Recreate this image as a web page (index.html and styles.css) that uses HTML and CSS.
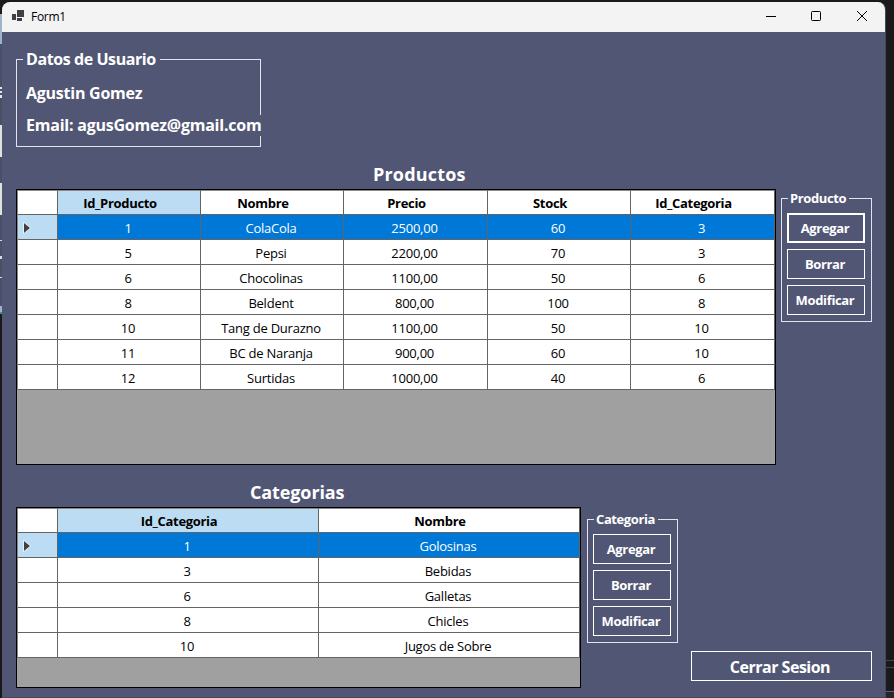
FILE: index.html
```html
<!DOCTYPE html>
<html lang="es">
<head>
<meta charset="utf-8">
<title>Form1</title>
<link rel="stylesheet" href="styles.css">
</head>
<body>
<div class="desktop">
<div class="edge-left"></div>
<div class="window">
  <header class="titlebar">
    <svg class="app-icon" width="12" height="12" viewBox="0 0 12 12"><path fill="#404040" d="M5 0h7v7H5zM0 4h4v6H0zM5 8h5v3H5z"/></svg>
    <span class="title">Form1</span>
    <div class="controls">
      <svg width="12" height="12" viewBox="0 0 12 12"><path d="M2 6.500h10" stroke="#000"/></svg>
      <svg width="12" height="12" viewBox="0 0 12 12"><rect x="1.500" y="1.500" width="9" height="9" rx="1" fill="none" stroke="#000"/></svg>
      <svg width="12" height="12" viewBox="0 0 12 12"><path d="M1 1l10 10M11 1L1 11" stroke="#000"/></svg>
    </div>
  </header>
  <main class="form">
    <section class="group user">
      <div class="legend">Datos de Usuario</div>
      <div class="name">Agustin Gomez</div>
      <div class="email">Email: agusGomez@gmail.com</div>
    </section>

    <div class="block products">
      <div class="main-col">
        <h2>Productos</h2>
        <div class="grid">
          <div class="row head"><div></div><div class="hot">Id_Producto</div><div>Nombre</div><div>Precio</div><div>Stock</div><div>Id_Categoria</div></div>
          <div class="row sel"><div class="mark"><svg width="8" height="12" viewBox="0 0 8 12"><path d="M1 1l6 5-6 5z" fill="#404040" stroke="#fff" stroke-width="1.200" paint-order="stroke"/></svg></div><div>1</div><div>ColaCola</div><div>2500,00</div><div>60</div><div>3</div></div>
          <div class="row"><div></div><div>5</div><div>Pepsi</div><div>2200,00</div><div>70</div><div>3</div></div>
          <div class="row"><div></div><div>6</div><div>Chocolinas</div><div>1100,00</div><div>50</div><div>6</div></div>
          <div class="row"><div></div><div>8</div><div>Beldent</div><div>800,00</div><div>100</div><div>8</div></div>
          <div class="row"><div></div><div>10</div><div>Tang de Durazno</div><div>1100,00</div><div>50</div><div>10</div></div>
          <div class="row"><div></div><div>11</div><div>BC de Naranja</div><div>900,00</div><div>60</div><div>10</div></div>
          <div class="row"><div></div><div>12</div><div>Surtidas</div><div>1000,00</div><div>40</div><div>6</div></div>
        </div>
      </div>
      <section class="group actions">
        <div class="legend">Producto</div>
        <button class="focused">Agregar</button>
        <button>Borrar</button>
        <button>Modificar</button>
      </section>
    </div>

    <div class="block categories">
      <div class="main-col">
        <h2>Categorias</h2>
        <div class="grid">
          <div class="row head"><div></div><div class="hot">Id_Categoria</div><div>Nombre</div></div>
          <div class="row sel"><div class="mark"><svg width="8" height="12" viewBox="0 0 8 12"><path d="M1 1l6 5-6 5z" fill="#404040" stroke="#fff" stroke-width="1.200" paint-order="stroke"/></svg></div><div>1</div><div>Golosinas</div></div>
          <div class="row"><div></div><div>3</div><div>Bebidas</div></div>
          <div class="row"><div></div><div>6</div><div>Galletas</div></div>
          <div class="row"><div></div><div>8</div><div>Chicles</div></div>
          <div class="row"><div></div><div>10</div><div>Jugos de Sobre</div></div>
        </div>
      </div>
      <section class="group actions">
        <div class="legend">Categoria</div>
        <button>Agregar</button>
        <button>Borrar</button>
        <button>Modificar</button>
      </section>
      <button class="logout">Cerrar Sesion</button>
    </div>
  </main>
</div>
<div class="edge-right"></div>
</div>
</body>
</html>
```
FILE: styles.css
```css
* { box-sizing: border-box; }
body {
  margin: 0;
  background: #1a1a1a;
  font-family: "Open Sans", "Noto Sans", sans-serif;
  font-size: 13px;
  color: #000;
}
.desktop {
  display: grid;
  grid-template-columns: 2px 884px 8px;
  height: 698px;
  padding-top: 2px;
  overflow: hidden;
}
.edge-left {
  background: linear-gradient(#1a1a1a 0 12px, #9db4cc 12px 42px, #4b4f68 42px 85px, #e4e6e6 85px 87px, #4b4f68 87px 89px, #e4e6e6 89px 91px, #4b4f68 91px 93px, #e4e6e6 93px 96px, #4b4f68 96px 123px, #dfe3dc 123px 155px, #4b4f68 155px 181px, #dfe3dc 181px 213px, #4b4f68 213px 238px, #d8dae0 238px 239px, #4b4f68 239px 254px, #d8dae0 254px 257px, #4b4f68 257px 275px, #d8dae0 275px 276px, #4b4f68 276px 304px, #9db4cc 304px 310px, #4a8a80 310px 312px, #1a1a1a 312px);
}
.edge-right {
  background: linear-gradient(#1a1a1a 0 658px, #444 658px 659px, #1a1a1a 659px 665px, #444 665px 666px, #1a1a1a 666px 689px, #6256a6 689px 690px, #262626 690px);
}
.window {
  height: 696px;
  background: #525675;
  border-radius: 8px 8px 0 0;
  border-right: 1px solid #45485c;
  border-bottom: 1px solid #45485c;
  overflow: hidden;
}
.titlebar {
  display: flex;
  align-items: center;
  height: 30px;
  padding: 0 17px 0 10px;
  background: #f3f3f3;
}
.title { margin-left: 7px; font-size: 12px; line-height: 28px; letter-spacing: -.3px; }
.app-icon { margin-top: -3px; }
.controls { display: flex; gap: 34px; margin: -2px 0 0 auto; }
.controls svg { display: block; }

.form { padding: 27px 0 0 14px; color: #fff; }
.group { border: 1px solid #e2e3ec; font-weight: 700; }
.legend { width: max-content; background: #525675; white-space: nowrap; }

.user { width: 245px; height: 88px; font-size: 16px; line-height: 22px; padding-left: 6px; letter-spacing: -.25px; }
.user .legend { margin-top: -12px; padding: 0 4px 0 3px; letter-spacing: -.42px; }
.user .name { margin-top: 12px; padding-left: 3px; }
.user .email { margin: 11px -3px 0 0; padding: 0 0 0 3px; width: max-content; line-height: 21px; background: #525675; white-space: nowrap; letter-spacing: -.23px; }

.block { display: flex; align-items: flex-start; }
.products { margin-top: 13px; }
.categories { margin-top: 12px; }
h2 { margin: 0; font-size: 18px; line-height: 29px; height: 29px; font-weight: 700; }
.products h2 { padding-left: 357px; letter-spacing: .18px; }
.categories h2 { padding-left: 234px; height: 30px; line-height: 30px; letter-spacing: -.12px; }

.grid { background: #a0a0a0; border: 1px solid #000; color: #000; }
.products .grid { width: 760px; height: 276px; }
.categories .grid { width: 565px; height: 181px; }
.row { display: grid; height: 25px; border-left: 1px solid #888; }
.products .row { grid-template-columns: 40px 143px 143px 144px 143px 144px; }
.categories .row { grid-template-columns: 40px 261px 261px; }
.row > div {
  background: #fff;
  border-right: 1px solid #646464;
  border-bottom: 1px solid #646464;
  padding-right: 2px;
  text-align: center;
  line-height: 27px;
  height: 25px;
  white-space: nowrap;
  letter-spacing: -.24px;
}
.row.head > div { border-top: 1px solid #888; font-weight: 700; padding-right: 18px; line-height: 24px; letter-spacing: -.32px; }
.row.head > .hot { background: #bcdcf4; }
.row.sel > div { background: #0078d7; color: #fff; }
.row.sel > .mark { display: flex; align-items: center; padding: 2px 0 0 5px; background: #bcdcf4; }

.actions { width: 91px; height: 124px; padding: 0 5px; margin-left: 5px; }
.products .actions { margin-top: 38px; }
.categories .actions { margin: 42px 0 0 6px; }
.actions .legend { margin: -10px 0 6px 1px; padding: 0 3px 0 2px; line-height: 18px; letter-spacing: -.4px; }
button {
  display: block;
  width: 78px;
  height: 30px;
  margin: 0 0 6px;
  padding: 0 2px 0 0;
  border: 1px solid #fff;
  background: transparent;
  color: #fff;
  font: 700 13px/26px "Open Sans", "Noto Sans", sans-serif;
  letter-spacing: -.35px;
}
button.focused { border-width: 2px; }
.logout { width: 181px; height: 30px; margin: 174px 0 0 13px; padding: 2px 3px 0 0; font-size: 16px; letter-spacing: -.5px; }
```
